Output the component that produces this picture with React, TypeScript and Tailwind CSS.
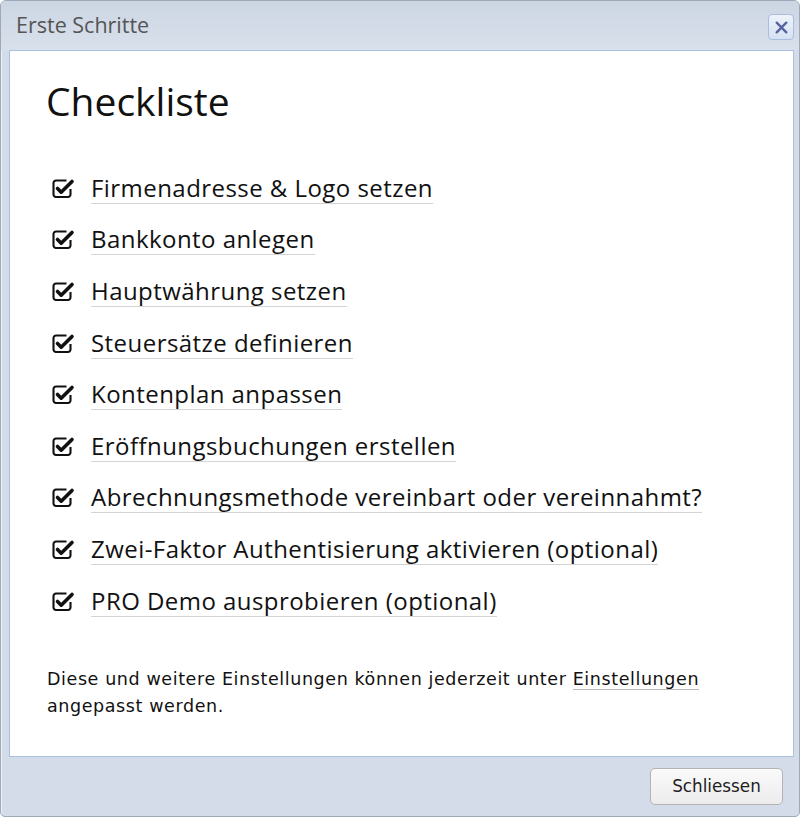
import React from "react";

const items = [
  "Firmenadresse & Logo setzen",
  "Bankkonto anlegen",
  "Hauptwährung setzen",
  "Steuersätze definieren",
  "Kontenplan anpassen",
  "Eröffnungsbuchungen erstellen",
  "Abrechnungsmethode vereinbart oder vereinnahmt?",
  "Zwei-Faktor Authentisierung aktivieren (optional)",
  "PRO Demo ausprobieren (optional)",
];

function CheckIcon() {
  return (
    <svg width="24" height="24" viewBox="0 0 24 24" className="shrink-0">
      <path
        d="M14.5 4.5 H4 a2.5 2.5 0 0 0 -2.5 2.5 v11.5 a2.5 2.5 0 0 0 2.5 2.5 h12 a2.5 2.5 0 0 0 2.5 -2.5 v-5.5"
        fill="none"
        stroke="#111"
        strokeWidth="2.1"
      />
      <path
        d="M5.5 12.5 L9.2 16.2 L20 5.5"
        fill="none"
        stroke="#111"
        strokeWidth="3.6"
        strokeLinecap="round"
        strokeLinejoin="round"
      />
    </svg>
  );
}

export default function App() {
  return (
    <div className="w-[800px] h-[817px] overflow-hidden bg-[#d3dce8] border border-[#9ea8b6] rounded-t-[6px] rounded-b-[5px] flex flex-col shadow-[inset_1px_1px_0_#eef2f7]">
      <div className="h-[49px] shrink-0 flex items-start justify-between pl-[15px] pr-[5px] bg-gradient-to-b from-[#ccd6e3] to-[#d8e0eb]">
        <span className="mt-[9px] text-[21.5px] leading-[30px] text-[#555] font-['Open_Sans',sans-serif]">
          Erste Schritte
        </span>
        <button className="mt-[13px] w-[26px] h-[26px] rounded-[4px] border border-[#a9bedf] bg-gradient-to-b from-[#eef3fb] to-[#d5e1f3] flex items-center justify-center">
          <svg width="15" height="15" viewBox="0 0 14 14">
            <path d="M2.5 2.5 L11.5 11.5 M11.5 2.5 L2.5 11.5" stroke="#5565a0" strokeWidth="2.2" strokeLinecap="round" />
          </svg>
        </button>
      </div>
      <div className="ml-[8px] mr-[5px] h-[707px] shrink-0 bg-white border border-[#a8c0e2] pl-[42px] pt-[24px] font-['Open_Sans',sans-serif] text-[#111]">
        <h1 className="ml-[-6px] text-[39px] leading-[52px] font-normal text-[#111]">Checkliste</h1>
        <ul className="mt-[35px] flex flex-col">
          {items.map((t) => (
            <li key={t} className="h-[51.6px] flex items-center">
              <CheckIcon />
              <span className="ml-[15px] text-[24px] leading-[31px] tracking-[0.45px] border-b border-[#d4d4d4]">{t}</span>
            </li>
          ))}
        </ul>
        <p className="mt-[40px] ml-[-5px] text-[17.5px] leading-[26.7px] tracking-[0.6px] text-[#111] font-['DejaVu_Sans','Verdana',sans-serif]">
          Diese und weitere Einstellungen können jederzeit unter{" "}
          <span className="border-b border-[#bbb]">Einstellungen</span>
          <br />
          angepasst werden.
        </p>
      </div>
      <div className="flex-1 flex items-start justify-end pr-[16px] pt-[11px]">
        <button className="w-[133px] h-[37px] rounded-[5px] border border-[#b3b3b3] bg-gradient-to-b from-[#fafafa] to-[#ececec] text-[16.8px] text-[#222] font-['DejaVu_Sans','Verdana',sans-serif]">
          Schliessen
        </button>
      </div>
    </div>
  );
}
